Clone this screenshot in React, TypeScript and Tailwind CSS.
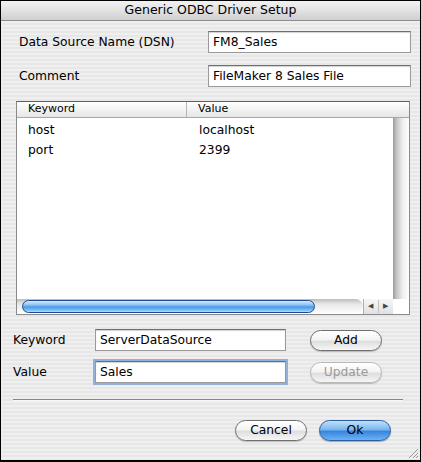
import React from "react";

const stripes =
  "bg-[repeating-linear-gradient(180deg,#efefef_0px,#efefef_2px,#e7e7e7_2px,#e7e7e7_4px)]";

function TextBox({ value, w, focus }: { value: string; w: string; focus?: boolean }) {
  return (
    <div
      className={`${w} h-[22px] flex items-center bg-white pl-[4px] border border-[#9a9a9a] border-t-[#6f6f6f] shadow-[inset_0_1px_1px_rgba(0,0,0,0.18)] ${
        focus ? "outline outline-[2px] outline-[#8db3dd] outline-offset-0" : ""
      }`}
    >
      <span className="leading-none text-black">{value}</span>
    </div>
  );
}

function PillButton({ label, disabled, primary, w }: { label: string; disabled?: boolean; primary?: boolean; w: string }) {
  if (primary) {
    return (
      <div className={`${w} h-[21px] rounded-full border border-[#2c5d9e] bg-[linear-gradient(180deg,#c2e0fa_0%,#7ab6ef_45%,#3a86de_55%,#6cb2f5_100%)] shadow-[0_1px_1px_rgba(0,0,0,0.3)] flex items-center justify-center`}>
        <span className="text-black leading-none">{label}</span>
      </div>
    );
  }
  return (
    <div
      className={`${w} h-[21px] rounded-full border ${
        disabled ? "border-[#b8b8b8]" : "border-[#6f6f6f]"
      } bg-[linear-gradient(180deg,#ffffff_0%,#f4f4f4_45%,#dedede_55%,#f6f6f6_100%)] shadow-[0_1px_1px_rgba(0,0,0,0.2)] flex items-center justify-center`}
    >
      <span className={`leading-none ${disabled ? "text-[#9a9a9a]" : "text-black"}`}>{label}</span>
    </div>
  );
}

export default function App() {
  return (
    <div className="w-[421px] h-[462px] overflow-hidden border border-black border-b-2 flex flex-col font-['DejaVu_Sans',sans-serif] text-[12.3px] text-black">
      {/* Title bar */}
      <div className="h-[20px] shrink-0 flex items-center justify-center bg-[linear-gradient(180deg,#f2f2f2_0%,#e2e2e2_50%,#cfcfcf_100%)] border-b border-[#8c8c8c]">
        <span className="leading-none text-[12.5px]">Generic ODBC Driver Setup</span>
      </div>

      {/* Body */}
      <div className={`relative flex-1 flex flex-col ${stripes}`}>
        <div className="mt-[10px] flex items-center">
          <span className="ml-[18px] w-[189px]">Data Source Name (DSN)</span>
          <TextBox value="FM8_Sales" w="w-[203px]" />
        </div>
        <div className="mt-[12px] flex items-center">
          <span className="ml-[18px] w-[189px]">Comment</span>
          <TextBox value="FileMaker 8 Sales File" w="w-[203px]" />
        </div>

        {/* List */}
        <div className="mt-[14px] ml-[15px] w-[394px] h-[214px] border border-[#8a8a8a] border-t-[#5f5f5f] bg-white flex flex-col">
          <div className="h-[16px] shrink-0 flex bg-[linear-gradient(180deg,#ffffff_0%,#f3f3f3_50%,#e6e6e6_100%)] border-b border-[#a8a8a8] text-[11px]">
            <div className="w-[170px] border-r border-[#b5b5b5] pl-[11px] flex items-center">Keyword</div>
            <div className="pl-[11px] flex items-center">Value</div>
          </div>
          <div className="flex-1 flex">
            <div className="flex-1 flex flex-col pt-[2px]">
              <div className="h-[20px] flex items-center">
                <span className="w-[182px] pl-[11px]">host</span>
                <span>localhost</span>
              </div>
              <div className="h-[20px] flex items-center">
                <span className="w-[182px] pl-[11px]">port</span>
                <span>2399</span>
              </div>
            </div>
            <div className="w-[16px] bg-[linear-gradient(90deg,#9c9c9c_0%,#c8c8c8_25%,#eeeeee_60%,#ffffff_100%)]" />
          </div>
          <div className="h-[15px] shrink-0 flex">
            <div className="flex-1 flex items-center bg-[linear-gradient(180deg,#bdbdbd_0%,#e9e9e9_35%,#ffffff_100%)] rounded-r-full">
              <div className="ml-[5px] w-[293px] h-[13px] rounded-full border border-[#1e4b8f] bg-[linear-gradient(180deg,#d9ecfc_0%,#8cc3f3_35%,#4d9ae6_55%,#7fc0f7_85%,#bfe0fb_100%)]" />
            </div>
            <div className="w-[30px] flex items-center text-[#444] text-[7px] border-l border-[#b0b0b0] bg-[linear-gradient(180deg,#f7f7f7,#e0e0e0)]">
              <span className="w-[15px] text-center border-r border-[#c0c0c0] leading-[13px]">◀</span>
              <span className="w-[15px] text-center leading-[13px]">▶</span>
            </div>
            <div className="w-[16px] bg-white" />
          </div>
        </div>

        {/* Keyword / Value */}
        <div className="mt-[14px] flex items-center">
          <span className="ml-[12px] w-[82px]">Keyword</span>
          <TextBox value="ServerDataSource" w="w-[191px]" />
          <div className="ml-[24px]">
            <PillButton label="Add" w="w-[72px]" />
          </div>
        </div>
        <div className="mt-[10px] flex items-center">
          <span className="ml-[12px] w-[82px]">Value</span>
          <TextBox value="Sales" w="w-[191px]" focus />
          <div className="ml-[24px]">
            <PillButton label="Update" w="w-[72px]" disabled />
          </div>
        </div>

        <div className="mt-[16px] ml-[12px] w-[390px] h-[2px] bg-[#858585] border-b border-[#f8f8f8]" />

        <div className="mt-[19px] flex">
          <div className="ml-[234px]">
            <PillButton label="Cancel" w="w-[72px]" />
          </div>
          <div className="ml-[12px]">
            <PillButton label="Ok" w="w-[72px]" primary />
          </div>
        </div>

        {/* resize grip */}
        <svg className="absolute right-[1px] bottom-[1px]" width="12" height="12" viewBox="0 0 12 12">
          <line x1="2" y1="11" x2="11" y2="2" stroke="#9a9a9a" strokeWidth="1" />
          <line x1="6" y1="11" x2="11" y2="6" stroke="#9a9a9a" strokeWidth="1" />
          <line x1="9" y1="11" x2="11" y2="9" stroke="#9a9a9a" strokeWidth="1" />
        </svg>
      </div>
    </div>
  );
}
